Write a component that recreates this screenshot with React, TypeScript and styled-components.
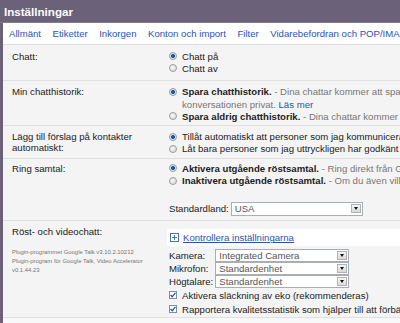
import React from 'react';
import styled, { createGlobalStyle } from 'styled-components';

const GlobalStyle = createGlobalStyle`
  html, body {
    margin: 0;
    padding: 0;
    background: #6b6178;
  }
  body {
    font-family: "Liberation Sans", Arial, sans-serif;
  }
`;

const Page = styled.div`
  width: 400px;
  height: 323px;
  overflow: hidden;
  display: flex;
  flex-direction: column;
  background: #6b6178;
`;

const Header = styled.div`
  height: 22px;
  border-bottom: 1px solid #857c92;
  display: flex;
  align-items: center;
  padding-left: 4px;
`;

const Title = styled.div`
  color: #fff;
  font-size: 11.6px;
  font-weight: bold;
`;

const Panel = styled.div`
  flex: 1;
  margin-left: 3px;
  background: #f4f4f4;
  overflow: hidden;
  display: flex;
  flex-direction: column;
`;

const TabBar = styled.div`
  height: 21px;
  flex: none;
  background: #fff;
  border-bottom: 1px solid #dcdcdc;
  display: flex;
  align-items: center;
  gap: 11.5px;
  padding: 0 6px;
  white-space: nowrap;
`;

const Tab = styled.span`
  font-size: 9.6px;
  color: #2a55ae;
`;

const Row = styled.div<{ $pt: number; $pb: number }>`
  flex: none;
  display: grid;
  grid-template-columns: 156px 1fr;
  padding: ${(p) => p.$pt}px 0 ${(p) => p.$pb}px 9px;
  border-bottom: 1px solid #e0e0e0;
`;

const Label = styled.div`
  font-size: 9.6px;
  line-height: 11px;
  color: #222;
  padding-top: 0.6px;
`;

const Plugins = styled.div`
  margin-top: 11.5px;
  font-size: 5.9px;
  line-height: 9px;
  color: #777;
`;

const Options = styled.div`
  min-width: 0;
  display: flex;
  flex-direction: column;
  white-space: nowrap;
  font-size: 9.6px;
  color: #222;
`;

const Line = styled.div<{ $indent?: boolean }>`
  height: 12.3px;
  display: flex;
  align-items: center;
  gap: 5px;
  padding-left: ${(p) => (p.$indent ? '14px' : '1px')};
`;

const Strong = styled.b`
  font-weight: bold;
`;

const Note = styled.span`
  color: #777;
`;

const Link = styled.span<{ $underline?: boolean }>`
  color: #2a55ae;
  text-decoration: ${(p) => (p.$underline ? 'underline' : 'none')};
`;

const Radio = styled.span<{ $on?: boolean }>`
  flex: none;
  width: 8px;
  height: 8px;
  box-sizing: border-box;
  border-radius: 50%;
  border: 1px solid #9b9b9b;
  background: ${(p) =>
    p.$on
      ? 'radial-gradient(circle, #1d5a96 0 1.7px, #dfe6ee 2.3px)'
      : 'radial-gradient(circle at 40% 40%, #f7f7f7 0, #d4d4d4 100%)'};
`;

const Box = styled.span`
  flex: none;
  width: 8px;
  height: 8px;
  box-sizing: border-box;
  border: 1px solid #7c8ea3;
  background: #fff;
  display: flex;
  align-items: center;
  justify-content: center;
`;

const SelectRow = styled.div`
  margin-top: 15px;
  height: 14px;
  display: flex;
  align-items: center;
  gap: 2px;
  padding-left: 1px;
`;

const FakeSelect = styled.div<{ $w: number; $h: number }>`
  width: ${(p) => p.$w}px;
  height: ${(p) => p.$h}px;
  box-sizing: border-box;
  border: 1px solid #a7aeb5;
  background: #fff;
  display: flex;
  align-items: center;
  padding: 0 1px 0 3px;
  color: #555;
  font-size: 9.6px;
`;

const SelectText = styled.span`
  flex: 1;
`;

const Arrow = styled.span`
  width: 10px;
  height: 9px;
  box-sizing: border-box;
  border: 1px solid #b3b3b3;
  background: linear-gradient(#f6f6f6, #d9d9d9);
  display: flex;
  align-items: center;
  justify-content: center;
  &::after {
    content: '';
    border-left: 2.5px solid transparent;
    border-right: 2.5px solid transparent;
    border-top: 3px solid #111;
  }
`;

const CheckLink = styled.div`
  margin: 4.4px 0 3px -1px;
  height: 17px;
  background: #fff;
  display: flex;
  align-items: center;
  gap: 4px;
  padding-left: 3px;
`;

const Devices = styled.div`
  display: grid;
  grid-template-columns: auto 134px;
  grid-auto-rows: 13px;
  column-gap: 2px;
  align-items: center;
  justify-content: start;
  padding-left: 1px;
`;

const CheckLine = styled(Line)`
  height: 14px;
`;

const Footer = styled.div`
  flex: 1;
  background: #f8f8f8;
`;

const Plus = () => (
  <svg width="9" height="9" viewBox="0 0 9 9">
    <rect x="0.5" y="0.5" width="8" height="8" fill="#fff" stroke="#4a74b4" />
    <path d="M2 4.5h5M4.5 2v5" stroke="#4a74b4" strokeWidth="1" />
  </svg>
);

const Check = () => (
  <svg width="6" height="6" viewBox="0 0 6 6">
    <path d="M0.6 3l1.6 1.8L5.4 0.8" fill="none" stroke="#2452a0" strokeWidth="1.3" />
  </svg>
);

const Select: React.FC<{ w: number; h: number; value: string }> = ({ w, h, value }) => (
  <FakeSelect $w={w} $h={h}>
    <SelectText>{value}</SelectText>
    <Arrow />
  </FakeSelect>
);

const tabs = [
  'Allmänt',
  'Etiketter',
  'Inkorgen',
  'Konton och import',
  'Filter',
  'Vidarebefordran och POP/IMAP',
  'Chatt',
];

const devices = [
  { label: 'Kamera:', value: 'Integrated Camera' },
  { label: 'Mikrofon:', value: 'Standardenhet' },
  { label: 'Högtalare:', value: 'Standardenhet' },
];

const App: React.FC = () => (
  <>
    <GlobalStyle />
    <Page>
      <Header>
        <Title>Inställningar</Title>
      </Header>
      <Panel>
        <TabBar>
          {tabs.map((t) => (
            <Tab key={t}>{t}</Tab>
          ))}
        </TabBar>

        <Row $pt={5} $pb={5}>
          <Label>Chatt:</Label>
          <Options>
            <Line>
              <Radio $on />
              Chatt på
            </Line>
            <Line>
              <Radio />
              Chatt av
            </Line>
          </Options>
        </Row>

        <Row $pt={5} $pb={3}>
          <Label>Min chatthistorik:</Label>
          <Options>
            <Line>
              <Radio $on />
              <span>
                <Strong>Spara chatthistorik.</Strong>
                <Note> - Dina chattar kommer att sparas under Chattar och kan sökas, men du kan hålla</Note>
              </span>
            </Line>
            <Line $indent>
              <span>
                <Note>konversationen privat. </Note>
                <Link>Läs mer</Link>
              </span>
            </Line>
            <Line>
              <Radio />
              <span>
                <Strong>Spara aldrig chatthistorik.</Strong>
                <Note> - Dina chattar kommer aldrig att sparas</Note>
              </span>
            </Line>
          </Options>
        </Row>

        <Row $pt={4} $pb={3}>
          <Label>
            Lägg till förslag på kontakter
            <br />
            automatiskt:
          </Label>
          <Options>
            <Line>
              <Radio $on />
              Tillåt automatiskt att personer som jag kommunicerar med ofta kan se mig
            </Line>
            <Line>
              <Radio />
              Låt bara personer som jag uttryckligen har godkänt chatta med mig
            </Line>
          </Options>
        </Row>

        <Row $pt={3} $pb={4}>
          <Label>Ring samtal:</Label>
          <Options>
            <Line>
              <Radio $on />
              <span>
                <Strong>Aktivera utgående röstsamtal.</Strong>
                <Note> - Ring direkt från Gmail till vanliga telefoner</Note>
              </span>
            </Line>
            <Line>
              <Radio />
              <span>
                <Strong>Inaktivera utgående röstsamtal.</Strong>
                <Note> - Om du även vill inaktivera inkommande samtal</Note>
              </span>
            </Line>
            <SelectRow>
              Standardland:
              <Select w={132} h={14} value="USA" />
            </SelectRow>
          </Options>
        </Row>

        <Row $pt={4.4} $pb={1}>
          <Label>
            Röst- och videochatt:
            <Plugins>
              Plugin-programmet Google Talk v3.10.2.10212
              <br />
              Plugin-program för Google Talk, Video Accelerator
              <br />
              v0.1.44.23
            </Plugins>
          </Label>
          <Options>
            <CheckLink>
              <Plus />
              <Link $underline>Kontrollera inställningarna</Link>
            </CheckLink>
            <Devices>
              {devices.map((d) => (
                <React.Fragment key={d.label}>
                  <span>{d.label}</span>
                  <Select w={134} h={13} value={d.value} />
                </React.Fragment>
              ))}
            </Devices>
            <CheckLine>
              <Box>
                <Check />
              </Box>
              Aktivera släckning av eko (rekommenderas)
            </CheckLine>
            <CheckLine>
              <Box>
                <Check />
              </Box>
              Rapportera kvalitetsstatistik som hjälper till att förbättra röst- och videochatt
            </CheckLine>
          </Options>
        </Row>
        <Footer />
      </Panel>
    </Page>
  </>
);

export default App;
